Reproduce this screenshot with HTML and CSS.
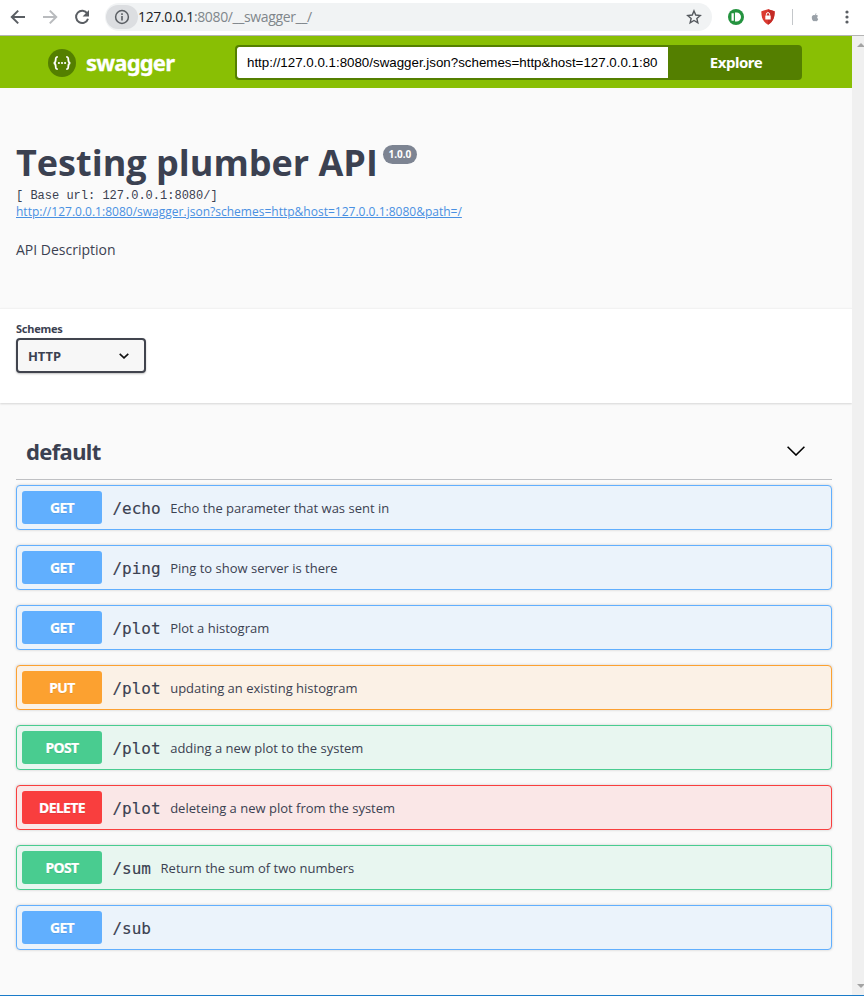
FILE: index.html
```html
<!DOCTYPE html>
<html lang="en">
<head>
<meta charset="utf-8">
<title>Swagger UI</title>
<link rel="stylesheet" href="styles.css">
</head>
<body>
<div class="browser">
  <header class="toolbar">
    <svg class="nav" viewBox="0 0 16 16"><path d="M15 8H2M8.2 1.6 1.8 8l6.4 6.4" fill="none" stroke="#5a5e63" stroke-width="2"/></svg>
    <svg class="nav" viewBox="0 0 16 16"><path d="M1 8h13M7.8 1.6 14.2 8l-6.4 6.4" fill="none" stroke="#b9bbbe" stroke-width="2"/></svg>
    <svg class="nav" viewBox="0 0 16 16"><path d="M13.3 4.6A6.1 6.1 0 1 0 14 9.7" fill="none" stroke="#5a5e63" stroke-width="2"/><path d="M15 1v6.4H8.6z" fill="#5a5e63"/></svg>
    <div class="omnibox">
      <span class="site-info"><svg width="16" height="16" viewBox="0 0 16 16"><circle cx="8" cy="8" r="6.4" fill="none" stroke="#5a5e63" stroke-width="1.5"/><path d="M8 7v4.6M8 4.2v1.7" stroke="#5a5e63" stroke-width="1.6"/></svg></span>
      <span class="address">127.0.0.1<span class="rest">:8080/__swagger__/</span></span>
      <svg class="star" width="16" height="16" viewBox="0 0 16 16"><path d="M8 1.9l1.75 4.15 4.5.4-3.4 2.95 1 4.4L8 11.5l-3.85 2.3 1-4.4-3.4-2.95 4.5-.4z" fill="none" stroke="#55595e" stroke-width="1.4"/></svg>
    </div>
    <svg class="ext" width="16" height="16" viewBox="0 0 16 16"><circle cx="8" cy="8" r="8" fill="#24933f"/><path d="M3.500 4.200h2.300v7.600H3.500zM7 3.500h1.500a4.500 4.500 0 0 1 0 9H7z" fill="#fff"/></svg>
    <svg class="shield" width="14" height="16" viewBox="0 0 14 16"><path d="M7 .3 13.600 2.300C13.800 8.500 12 12.800 7 15.800 2 12.800.2 8.500.4 2.300z" fill="#db3a30"/><path d="M7 .3 13.600 2.300C13.800 8.500 12 12.800 7 15.800z" fill="#c42b26"/><path d="M4.300 6.500h5.400v4H4.300z" fill="#fff"/><path d="M5.400 6.500V5.200a1.600 1.600 0 0 1 3.200 0v1.300" fill="none" stroke="#fff"/></svg>
    <i class="divider"></i>
    <svg class="apple" width="8" height="9" viewBox="0 0 8 9"><path d="M4 2.300C2.500 1.600.7 2.200.8 4.700c.1 2 1.200 3.600 2.200 3.600l1-.3 1 .3c.9 0 1.800-1.200 2.200-2.400-1.400-.7-1.300-2.400-.1-3C6.400 2 5.200 1.900 4 2.300zM4 1.900C4 .9 4.600.3 5.400.2 5.500 1.100 5 1.800 4 1.900z" fill="#9aa1a8"/></svg>
    <svg class="more" width="4" height="14" viewBox="0 0 4 14"><g fill="#5a5e63"><circle cx="2" cy="2" r="1.600"/><circle cx="2" cy="7" r="1.600"/><circle cx="2" cy="12" r="1.600"/></g></svg>
  </header>
  <div class="viewport">
    <main class="page">
      <div class="topbar">
        <svg class="logo" width="28" height="28" viewBox="0 0 28 28"><circle cx="14" cy="14" r="14" fill="#547f00"/><path d="M9.800 7.800c-2 0-2.100.8-2.100 2.600 0 2-.2 3.200-1.900 3.600 1.700.4 1.900 1.600 1.900 3.600 0 1.800.1 2.600 2.100 2.600M18.200 7.800c2 0 2.100.8 2.100 2.600 0 2 .2 3.200 1.900 3.600-1.700.4-1.900 1.600-1.900 3.600 0 1.800-.1 2.600-2.100 2.600" fill="none" stroke="#fff" stroke-width="1.800"/><g fill="#fff"><circle cx="10.900" cy="14" r="1.100"/><circle cx="14" cy="14" r="1.100"/><circle cx="17.100" cy="14" r="1.100"/></g></svg>
        <span class="brand">swagger</span>
        <div class="url-form"><div class="url-input">http://127.0.0.1:8080/swagger.json?schemes=http&amp;host=127.0.0.1:80</div><div class="explore">Explore</div></div>
      </div>
      <section class="info">
        <div class="title-row"><h1>Testing plumber API</h1><span class="version">1.0.0</span></div>
        <div class="base-url">[ Base url: 127.0.0.1:8080/]</div>
        <a class="spec-link">http://127.0.0.1:8080/swagger.json?schemes=http&amp;host=127.0.0.1:8080&amp;path=/</a>
        <p class="description">API Description</p>
      </section>
      <section class="schemes">
        <div class="schemes-label">Schemes</div>
        <div class="select"><span>HTTP</span><svg width="10" height="6" viewBox="0 0 10 6"><path d="M.7.8 5 4.800 9.300.8" fill="none" stroke="#111" stroke-width="1.600"/></svg></div>
      </section>
      <section class="operations">
        <div class="tag"><h2>default</h2><svg width="18" height="10" viewBox="0 0 18 10"><path d="M.6.8 9 9 17.400.8" fill="none" stroke="#000" stroke-width="1.600"/></svg></div>
        <div class="op get"><span class="method">GET</span><span class="path">/echo</span><span class="summary">Echo the parameter that was sent in</span></div>
        <div class="op get"><span class="method">GET</span><span class="path">/ping</span><span class="summary">Ping to show server is there</span></div>
        <div class="op get"><span class="method">GET</span><span class="path">/plot</span><span class="summary">Plot a histogram</span></div>
        <div class="op put"><span class="method">PUT</span><span class="path">/plot</span><span class="summary">updating an existing histogram</span></div>
        <div class="op post"><span class="method">POST</span><span class="path">/plot</span><span class="summary">adding a new plot to the system</span></div>
        <div class="op delete"><span class="method">DELETE</span><span class="path">/plot</span><span class="summary">deleteing a new plot from the system</span></div>
        <div class="op post"><span class="method">POST</span><span class="path">/sum</span><span class="summary">Return the sum of two numbers</span></div>
        <div class="op get"><span class="method">GET</span><span class="path">/sub</span></div>
      </section>
    </main>
    <div class="scrollbar"><i class="arrow up"></i><i class="arrow down"></i></div>
  </div>
</div>
</body>
</html>
```
FILE: styles.css
```css
* { box-sizing: border-box; }
body { margin: 0; background: #fafafa; color: #3b4151; font-family: "Open Sans", sans-serif; }
.browser { height: 996px; display: flex; flex-direction: column; overflow: hidden; border-bottom: 1px solid #1a7bc9; }
.toolbar { height: 36px; flex: none; display: flex; align-items: center; background: #fff; border-bottom: 1px solid #b4b4b4; padding: 0 13px 1px 10px; }
.nav { width: 16px; height: 16px; margin-right: 16px; flex: none; }
.omnibox { width: 607px; height: 28px; border-radius: 14px; background: #f1f3f4; display: flex; align-items: center; flex: none; margin-left: -1px; }
.site-info { width: 32px; height: 24px; border-radius: 12px; background: #dcdee1; display: flex; align-items: center; justify-content: center; margin-left: 1px; }
.address { font: 14px/20px "Open Sans", sans-serif; letter-spacing: -.35px; color: #202124; white-space: nowrap; }
.rest { color: #80868b; letter-spacing: -.37px; }
.star { margin-left: auto; margin-right: 10px; }
.ext { margin-left: 16px; }
.shield { margin-left: 17px; }
.divider { width: 1px; height: 16px; background: #c4c7ca; margin-left: 17px; }
.apple { margin-left: 18px; }
.more { margin-left: auto; margin-right: 2px; flex: none; }
.viewport { display: flex; flex: 1; min-height: 0; }
.page { width: 852px; background: #fafafa; }
.topbar { height: 52px; background: #89bf04; display: flex; align-items: center; padding-left: 48px; }
.brand { width: 160px; margin-left: 10px; color: #fff; font: bold 22px/30px "Noto Sans", sans-serif; letter-spacing: -.8px; -webkit-text-stroke: .3px #fff; }
.logo { flex: none; margin-top: 1px; }
.url-form { width: 567px; height: 35px; margin-left: -11px; margin-top: 1px; border: 2px solid #547f00; border-radius: 4px; background: #547f00; display: flex; overflow: hidden; }
.url-input { width: 431px; flex: none; background: #fff; color: #000; padding-left: 10px; font: 13.333px/31px "Liberation Sans", sans-serif; white-space: nowrap; border-radius: 2px 0 0 2px; }
.explore { flex: 1; padding-left: 4px; text-align: center; color: #fff; font: bold 15px/31px "Noto Sans", sans-serif; letter-spacing: -.5px; }
.info { height: 220px; padding: 50px 16px 0; }
.title-row { display: flex; height: 50px; align-items: flex-start; }
h1 { margin: 0; font-size: 36px; line-height: 49px; font-weight: 700; white-space: nowrap; }
.version { margin: 7px 0 0 5px; width: 34px; height: 19px; border-radius: 10px; background: #7d8492; color: #fff; font: bold 10px/19px "Noto Sans", sans-serif; text-align: center; }
.base-url { font: 12px/16px "Liberation Mono", monospace; white-space: pre; }
.spec-link { display: block; font-size: 12px; line-height: 17px; margin-top: -1px; color: #4990e2; text-decoration: underline; white-space: nowrap; letter-spacing: .01px; }
.description { margin: 20px 0 0; font-size: 14px; line-height: 20px; }
.schemes { height: 95px; background: #fff; border-top: 1px solid #f2f2f2; padding: 12px 16px 0; box-shadow: 0 1px 2px rgba(0,0,0,.15); }
.schemes-label { height: 17px; font: bold 11px/16px "Noto Sans", sans-serif; letter-spacing: -.25px; }
.select { width: 130px; height: 35px; border: 2px solid #41444e; border-radius: 4px; background: #f7f7f7; box-shadow: 0 1px 2px rgba(0,0,0,.25); display: flex; align-items: center; justify-content: space-between; padding: 0 15px 0 10px; font: bold 13px/20px "Noto Sans", sans-serif; letter-spacing: -.1px; }
.operations { padding: 26px 20px 0 16px; }
.tag { height: 51px; border-bottom: 1px solid #bfc0c3; margin-bottom: 5px; display: flex; align-items: center; justify-content: space-between; padding: 0 27px 6px 10px; }
h2 { margin: 0; font: bold 22px/34px "Noto Sans", sans-serif; letter-spacing: -.65px; }
.op { height: 45px; margin-bottom: 15px; display: flex; align-items: center; border: 1px solid; border-radius: 4px; padding: 0 5px; box-shadow: 0 0 3px rgba(0,0,0,.19); white-space: nowrap; }
.method { width: 80px; height: 33px; border-radius: 3px; color: #fff; text-align: center; font: bold 14px/34px "Noto Sans", sans-serif; letter-spacing: -.65px; -webkit-text-stroke: .2px #fff; text-shadow: 0 1px 0 rgba(0,0,0,.1); margin-right: 10.500px; }
.path { font: 16px/24px "DejaVu Sans Mono", monospace; letter-spacing: -.03px; -webkit-text-stroke: .15px #3b4151; margin-right: 9.650px; padding-top: 3px; }
.summary { font-size: 13px; line-height: 18px; padding-top: 1px; }
.get { border-color: #61affe; background: #ebf3fb; }
.get .method { background: #61affe; }
.put { border-color: #fca130; background: #fbf1e6; }
.put .method { background: #fca130; }
.post { border-color: #49cc90; background: #e8f6f0; }
.post .method { background: #49cc90; }
.delete { border-color: #f93e3e; background: #fae7e7; }
.delete .method { background: #f93e3e; }
.scrollbar { width: 12px; background: #f0f0f0; display: flex; flex-direction: column; justify-content: space-between; padding: 7px 0 7px 5px; overflow: hidden; }
.arrow { width: 0; height: 0; border: 4px solid transparent; flex: none; }
.up { border-top: 0; border-bottom-color: #a3a3a3; }
.down { border-bottom: 0; border-top-color: #a3a3a3; }
```
